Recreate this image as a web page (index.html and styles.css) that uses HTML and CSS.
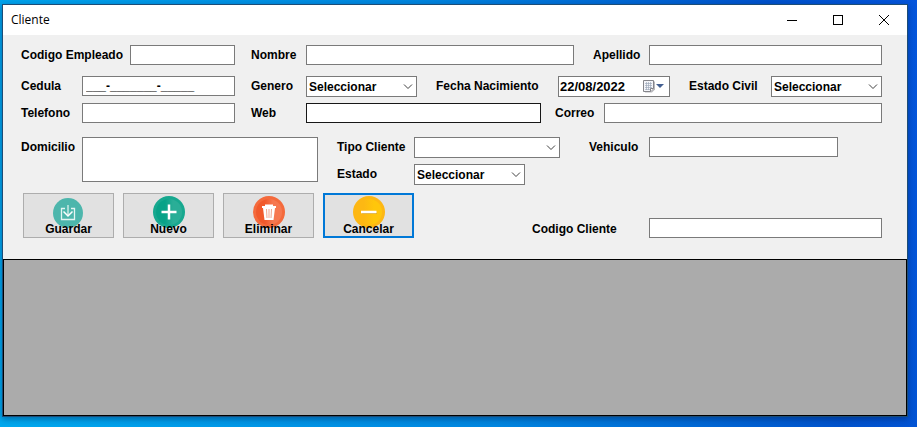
FILE: index.html
```html
<!DOCTYPE html>
<html lang="es">
<head>
<meta charset="utf-8">
<meta name="viewport" content="width=device-width, initial-scale=1">
<title>Cliente</title>
<link rel="stylesheet" href="styles.css">
</head>
<body>
<main class="window">
  <header class="titlebar">
    <h1 class="title">Cliente</h1>
    <div class="window-controls">
      <button type="button" class="control" aria-label="Minimizar"><svg width="10" height="10" shape-rendering="crispEdges"><path d="M0 5.5h10"/></svg></button>
      <button type="button" class="control" aria-label="Maximizar"><svg width="10" height="10" shape-rendering="crispEdges"><path d="M.5.5h9v9h-9z"/></svg></button>
      <button type="button" class="control" aria-label="Cerrar"><svg width="10" height="10"><path d="M0 0l10 10M10 0L0 10"/></svg></button>
    </div>
  </header>

  <form class="form">
    <div class="row row-name">
      <label for="codigo-empleado">Codigo Empleado</label>
      <input class="field" id="codigo-empleado" type="text">
      <label for="nombre">Nombre</label>
      <input class="field" id="nombre" type="text">
      <label for="apellido">Apellido</label>
      <input class="field" id="apellido" type="text">
    </div>

    <div class="row row-personal">
      <label for="cedula">Cedula</label>
      <input class="field" id="cedula" type="text" value="___-_______-_____">
      <label for="genero">Genero</label>
      <div class="combo">
        <select class="field" id="genero"><option>Seleccionar</option></select>
        <svg class="chevron" width="10" height="6"><path d="M1 .5l4 4 4-4"/></svg>
      </div>
      <label for="fecha">Fecha Nacimiento</label>
      <div class="combo">
        <input class="field date" id="fecha" type="text" value="22/08/2022">
        <button type="button" class="calendar" aria-label="Abrir calendario">
          <svg width="21" height="13">
            <path d="M2 1.500h10v8l-3 3H2z" fill="#b9b9bd"/>
            <path d="M.5.5h10v8l-3 3h-7z" fill="#f4f5f9" stroke="#85858b"/>
            <path d="M2 3.500h7M2 5.500h7M2 7.500h7M2 9.500h5M3.500 2v8M5.500 2v8M7.500 2v7" stroke="#9ba6b8" stroke-width="1" opacity=".65"/>
            <path d="M7.500 11.500v-3h3" stroke="#85858b" fill="#fff"/>
            <path d="M13 4h8l-4 4z" fill="#435f91"/>
          </svg>
        </button>
      </div>
      <label for="civil">Estado Civil</label>
      <div class="combo">
        <select class="field" id="civil"><option>Seleccionar</option></select>
        <svg class="chevron" width="10" height="6"><path d="M1 .5l4 4 4-4"/></svg>
      </div>
    </div>

    <div class="row row-contact">
      <label for="telefono">Telefono</label>
      <input class="field" id="telefono" type="text">
      <label for="web">Web</label>
      <input class="field hot" id="web" type="text">
      <label for="correo">Correo</label>
      <input class="field" id="correo" type="text">
    </div>

    <div class="row row-address">
      <label for="domicilio">Domicilio</label>
      <textarea class="field address" id="domicilio"></textarea>
      <label for="tipo">Tipo Cliente</label>
      <div class="combo">
        <select class="field" id="tipo"><option></option></select>
        <svg class="chevron" width="10" height="6"><path d="M1 .5l4 4 4-4"/></svg>
      </div>
      <label for="vehiculo">Vehiculo</label>
      <input class="field" id="vehiculo" type="text">
      <label class="status-label" for="estado">Estado</label>
      <div class="combo status">
        <select class="field" id="estado"><option>Seleccionar</option></select>
        <svg class="chevron" width="10" height="6"><path d="M1 .5l4 4 4-4"/></svg>
      </div>
    </div>

    <div class="actions">
      <button type="button" class="action">
        <svg class="icon" width="32" height="32" viewBox="0 0 32 32">
          <circle cx="15" cy="17" r="15" fill="#4db6ac"/>
          <path d="M12 12.500H8.500v11h13v-11H18" fill="none" stroke="#e4f5f3" stroke-width="1.300"/>
          <path d="M15 9v10" stroke="#a9dcd6" stroke-width="2"/>
          <path d="M10.500 15.500l4.500 4.500 4.500-4.500" fill="none" stroke="#fff" stroke-width="1.500"/>
        </svg>
        <span class="caption">Guardar</span>
      </button>
      <button type="button" class="action">
        <svg class="icon" width="32" height="32" viewBox="0 0 32 32">
          <defs><linearGradient id="green"><stop offset=".35" stop-color="#08a288"/><stop offset=".65" stop-color="#2aae97"/></linearGradient></defs>
          <circle cx="16" cy="16" r="16" fill="#17a88f"/>
          <circle cx="16" cy="16" r="13" fill="url(#green)"/>
          <path d="M16 8.500v15M8.500 16h15" stroke="#fff" stroke-width="2.500"/>
        </svg>
        <span class="caption">Nuevo</span>
      </button>
      <button type="button" class="action">
        <svg class="icon" width="32" height="32" viewBox="0 0 32 32">
          <defs><linearGradient id="orange"><stop offset=".35" stop-color="#f1592b"/><stop offset=".65" stop-color="#f67850"/></linearGradient></defs>
          <circle cx="16" cy="16" r="16" fill="#f46a3c"/>
          <circle cx="16" cy="16" r="13" fill="url(#orange)"/>
          <path d="M9 10h3V8.500h8V10h3v2h-1l-1.500 12h-9L10 12H9z" fill="#fff"/>
          <path d="M13.500 13l.5 9M16 13v9M18.500 13l-.5 9" stroke="#f1a78f"/>
        </svg>
        <span class="caption">Eliminar</span>
      </button>
      <button type="button" class="action default">
        <svg class="icon" width="32" height="32" viewBox="0 0 32 32">
          <defs><linearGradient id="yellow"><stop offset=".3" stop-color="#fdb813"/><stop offset=".7" stop-color="#ffc60b"/></linearGradient></defs>
          <circle cx="16" cy="16" r="16" fill="#fdb714"/>
          <circle cx="16" cy="16" r="13" fill="url(#yellow)"/>
          <path d="M9 17.500h15" stroke="#d9a21c"/>
          <path d="M8 16h15.500" stroke="#fff" stroke-width="2.500"/>
        </svg>
        <span class="caption">Cancelar</span>
      </button>
      <div class="client-code">
        <label class="client-code-label" for="codigo-cliente">Codigo Cliente</label>
        <input class="field" id="codigo-cliente" type="text">
      </div>
    </div>
  </form>

  <section class="records" aria-label="Clientes"></section>
</main>
</body>
</html>
```
FILE: styles.css
```css
* {
  box-sizing: border-box;
}

body {
  display: flex;
  min-height: 100vh;
  margin: 0;
  padding: 4px 9px 10px 2px;
  background: linear-gradient(80deg, #00a8ee, #0085df 50%, #0052cc 85%, #0455dc);
  color: #000;
  font: bold 12px/20px "Liberation Sans", Arial, sans-serif;
}

.window {
  display: flex;
  flex: 1;
  flex-direction: column;
  min-width: 0;
  border: 1px solid #1c4d77;
  background: #f0f0f0;
  box-shadow: 0 2px 6px rgba(0, 20, 60, 0.4);
}

.titlebar {
  display: flex;
  justify-content: space-between;
  height: 30px;
  padding-left: 8px;
  background: #fff;
}

.title {
  margin: 0;
  font: 12px/30px "Open Sans", "Noto Sans", sans-serif;
}

.window-controls {
  display: flex;
}

.control {
  display: grid;
  place-items: center;
  width: 46px;
  padding: 0;
  border: 0;
  background: none;
}

.control svg {
  fill: none;
  stroke: #000;
}

.form {
  padding: 10px 25px 21px 18px;
}

.row {
  display: grid;
  align-items: start;
}

.row label:not(:first-child) {
  padding-left: 16px;
}

.row-name {
  grid-template-columns: 109px 105fr 71px 268fr 75px 233fr;
  margin-bottom: 11px;
}

.row-personal {
  grid-template-columns: 61px 153fr 71px 111fr 141px 112fr 101px 111fr;
  margin-bottom: 6px;
}

.row-contact {
  grid-template-columns: 61px 153fr 71px 235fr 63px 278fr;
  margin-bottom: 14px;
}

.row-address {
  grid-template-columns: 61px 236fr 96px 146fr 89px 189fr 44fr;
  row-gap: 6px;
  margin-bottom: 8px;
}

.row label[for="fecha"],
.row label[for="civil"],
.row label[for="apellido"],
.row label[for="tipo"],
.row label[for="estado"] {
  padding-left: 19px;
}

.row label[for="correo"] {
  padding-left: 14px;
}

.row label[for="vehiculo"] {
  padding-left: 29px;
}

.field {
  display: block;
  width: 100%;
  min-width: 0;
  height: 20px;
  margin: 0;
  padding: 0 3px;
  border: 1px solid #7a7a7a;
  border-radius: 0;
  outline: 0;
  background: #fff;
  color: inherit;
  font: inherit;
  line-height: 18px;
}

.field.hot {
  border-color: #171717;
}

select.field {
  height: 21px;
  padding: 0 2px;
  appearance: none;
}

.combo {
  position: relative;
}

.chevron {
  position: absolute;
  top: 8px;
  right: 4px;
  fill: none;
  stroke: #404040;
  pointer-events: none;
}

.date {
  height: 21px;
  padding: 0 1px;
  font-size: 13px;
}

.calendar {
  position: absolute;
  top: 4px;
  right: 6px;
  padding: 0;
  border: 0;
  background: none;
}

.calendar svg {
  display: block;
  fill: none;
}

.address {
  grid-row: span 2;
  height: 45px;
  resize: none;
}

.status-label {
  grid-column: 3;
}

.status {
  width: 76%;
}

.actions {
  display: flex;
  gap: 9px;
  padding-left: 2px;
}

.action {
  display: flex;
  flex-direction: column;
  align-items: center;
  width: 91px;
  height: 45px;
  padding: 2px 0 0;
  border: 1px solid #adadad;
  background: #e1e1e1;
  color: inherit;
  font: inherit;
}

.action.default {
  padding-top: 1px;
  border: 2px solid #0078d7;
}

.icon {
  flex: none;
}

.caption {
  position: relative;
  margin-top: -7px;
  line-height: 16px;
}

.client-code {
  display: grid;
  flex: 1;
  grid-template-columns: 117px 233px;
  justify-content: end;
  align-self: end;
}

.client-code-label {
  padding-top: 3px;
  line-height: 17px;
}

.records {
  flex: 1;
  min-height: 80px;
  border: 1px solid #000;
  background: #ababab;
}
```
